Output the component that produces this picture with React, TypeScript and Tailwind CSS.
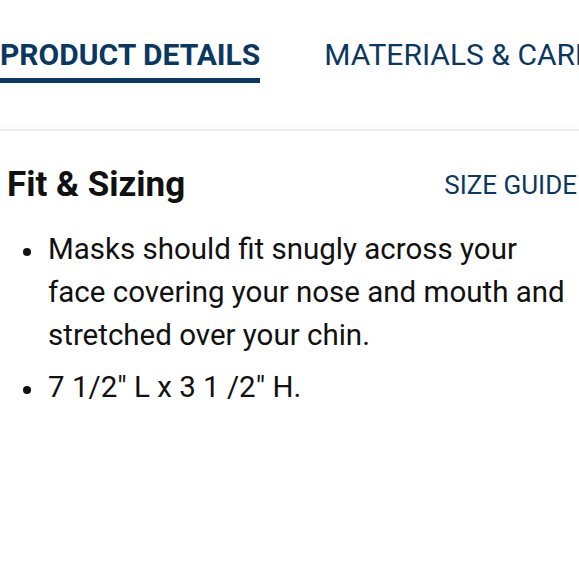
import React from 'react';

const tabs = [
  { label: 'PRODUCT DETAILS', active: true },
  { label: 'MATERIALS & CARE', active: false },
];

const bullets = [
  'Masks should fit snugly across your face covering your nose and mouth and stretched over your chin.',
  '7 1/2" L x 3 1 /2" H.',
];

export default function App() {
  return (
    <div className="w-[579px] h-[580px] overflow-hidden bg-white font-['Roboto',sans-serif]">
      {/* Tabs */}
      <div className="flex gap-[64px] pt-[37px] whitespace-nowrap">
        {tabs.map((tab) => (
          <div
            key={tab.label}
            className={
              tab.active
                ? 'text-[30px] leading-[36px] font-bold text-[#0b3862] pb-[5px] border-b-[5px] border-[#0b3862]'
                : 'text-[30px] leading-[36px] font-normal text-[#0b3862] pb-[5px] border-b-[5px] border-transparent'
            }
          >
            {tab.label}
          </div>
        ))}
      </div>

      {/* Divider */}
      <div className="mt-[46px] h-[2px] bg-[#ededed] shadow-[0_-2px_3px_rgba(0,0,0,0.03)]" />

      {/* Fit & Sizing */}
      <div className="pl-[7px]">
        <div className="mt-[34px] pr-[2px] flex items-center justify-between">
          <h2 className="text-[35px] leading-[40px] font-bold text-[#111]">Fit &amp; Sizing</h2>
          <span className="text-[26px] leading-[40px] text-[#0b3862]">SIZE GUIDE</span>
        </div>

        <ul className="mt-[23px] space-y-[9px]">
          {bullets.map((text) => (
            <li key={text} className="flex text-[29.5px] leading-[43px] text-[#111]">
              <span className="w-[41px] shrink-0 flex justify-center pr-[2px] pt-[20px]">
                <span className="block w-[8px] h-[8px] rounded-full bg-[#111]" />
              </span>
              <span className="w-[525px] shrink-0">{text}</span>
            </li>
          ))}
        </ul>
      </div>
    </div>
  );
}
